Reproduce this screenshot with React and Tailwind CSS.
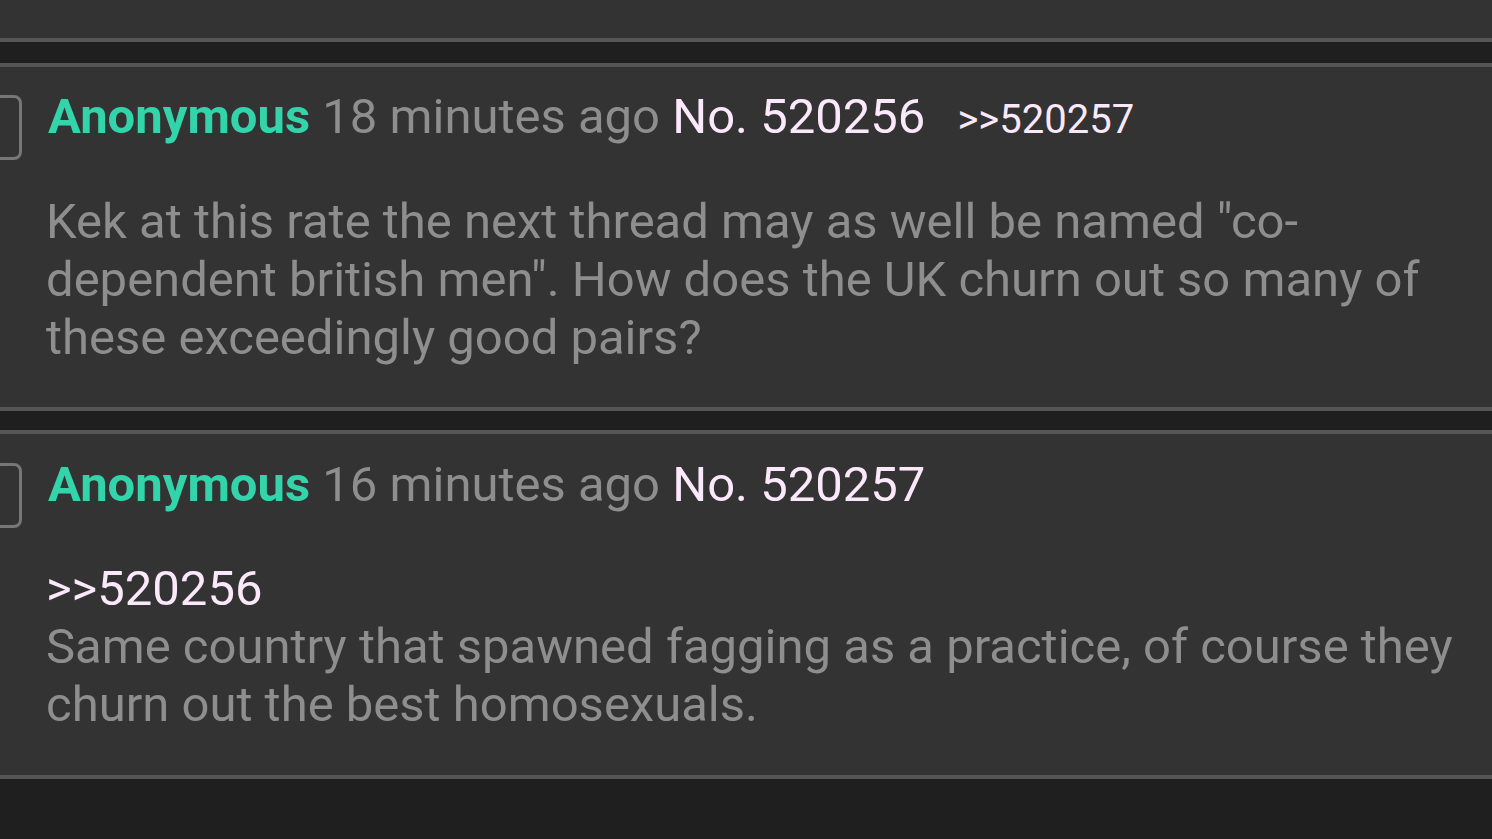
export default function App() {
  const font = { fontFamily: "Roboto, 'Noto Sans', sans-serif" };
  const Check = () => (
    <div className="shrink-0 -ml-[20px] mr-[26px] mt-[7px] w-[42px] h-[65px] rounded-[8px] border-[3px] border-[#777777]" />
  );
  return (
    <div className="w-[1492px] h-[839px] overflow-hidden bg-[#1f1f1f] flex flex-col" style={font}>
      <div className="h-[42px] shrink-0 bg-[#333333] border-b-[4px] border-[#555555]" />
      <div className="mt-[21px] shrink-0 bg-[#333333] border-y-[4px] border-[#555555] pt-[21px] pb-[40px]">
        <div className="flex items-start">
          <Check />
          <div className="text-[49px] leading-[58px] whitespace-nowrap">
            <span className="font-bold text-[#33d4aa]">Anonymous</span>{" "}
            <span className="text-[#8e8e8e]">18 minutes ago</span>{" "}
            <span className="text-[#fbe9fb]">No. 520256</span>
            <span className="text-[#fbe9fb] text-[40px] ml-[32px]">&gt;&gt;520257</span>
          </div>
        </div>
        <div className="mt-[33px] pl-[46px] pr-[20px] text-[49px] leading-[58px] text-[#8e8e8e]">
          Kek at this rate the next thread may as well be named "co-dependent british men". How does the UK churn out so many of these exceedingly good pairs?
        </div>
      </div>
      <div className="mt-[19px] shrink-0 bg-[#333333] border-y-[4px] border-[#555555] pt-[22px] pb-[41px]">
        <div className="flex items-start">
          <Check />
          <div className="text-[49px] leading-[58px] whitespace-nowrap">
            <span className="font-bold text-[#33d4aa]">Anonymous</span>{" "}
            <span className="text-[#8e8e8e]">16 minutes ago</span>{" "}
            <span className="text-[#fbe9fb]">No. 520257</span>
          </div>
        </div>
        <div className="mt-[32px] pl-[46px] pr-[20px] text-[49px] leading-[58px] text-[#8e8e8e]">
          <div className="text-[#fbe9fb]">&gt;&gt;520256</div>
          <div>Same country that spawned fagging as a practice, of course they churn out the best homosexuals.</div>
        </div>
      </div>
    </div>
  );
}
